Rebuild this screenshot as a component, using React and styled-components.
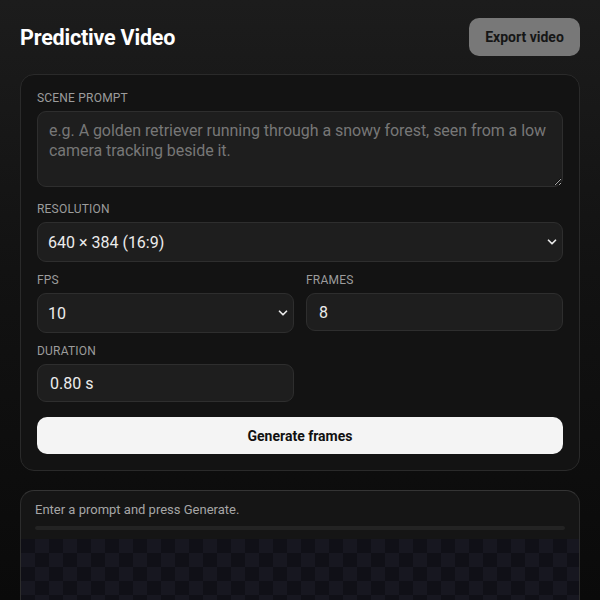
import React from 'react';
import styled, { createGlobalStyle } from 'styled-components';
import { ChevronDown } from 'lucide-react';

const GlobalStyle = createGlobalStyle`
    html, body {
        margin: 0;
        padding: 0;
        min-height: 100%;
    }
    body {
        background: linear-gradient(180deg, #1c1c1c 0%, #121212 45%, #0a0a0a 100%);
        color: #eee;
        font-family: Roboto, "Liberation Sans", sans-serif;
        color-scheme: dark;
    }
`;

const Page = styled.div`
    padding: 18px 20px 0;
    height: 600px;
    overflow: hidden;
    box-sizing: border-box;
`;

const Header = styled.header`
    display: flex;
    align-items: center;
    justify-content: space-between;
    margin-bottom: 18px;
`;

const Title = styled.h1`
    margin: 0;
    font-size: 21.5px;
    font-weight: 700;
    letter-spacing: -0.2px;
    color: #fff;
`;

const ExportButton = styled.button`
    width: 111px;
    height: 38px;
    border: none;
    border-radius: 10px;
    background: #787878;
    color: #161616;
    font-family: inherit;
    font-size: 14px;
    font-weight: 700;
`;

const Card = styled.section`
    background: #131313;
    border: 1px solid #2a2a2a;
    border-radius: 14px;
    padding: 16px;
    display: flex;
    flex-direction: column;
    gap: 11px;
`;

const Field = styled.label`
    display: flex;
    flex-direction: column;
    gap: 6px;
    flex: 1;
    min-width: 0;
`;

const Label = styled.span`
    font-size: 12px;
    line-height: 14px;
    color: #9c9c9c;
    letter-spacing: 0.2px;
    text-transform: uppercase;
`;

const controlBase = `
    box-sizing: border-box;
    width: 100%;
    background: #1e1e1e;
    border: 1px solid #2e2e2e;
    border-radius: 9px;
    color: #ececec;
    font-family: Roboto, "Liberation Sans", sans-serif;
    font-size: 16px;
    outline: none;
`;

const TextArea = styled.textarea`
    ${controlBase}
    display: block;
    height: 76px;
    padding: 9px 10px 9px 11px;
    line-height: 20px;
    letter-spacing: -0.05px;
    resize: vertical;
    margin-bottom: 4px;

    &::placeholder {
        color: #777;
    }
`;

const SelectWrap = styled.div`
    position: relative;
`;

const Select = styled.select`
    ${controlBase}
    appearance: none;
    height: 40px;
    padding: 0 28px 0 10px;
`;

const Chevron = styled(ChevronDown)`
    position: absolute;
    right: 4px;
    top: 50%;
    transform: translateY(-50%);
    color: #e8e8e8;
    pointer-events: none;
`;

const Input = styled.input`
    ${controlBase}
    height: 38px;
    padding: 0 12px;
`;

const Row = styled.div`
    display: flex;
    gap: 12px;
`;

const Spacer = styled.div`
    flex: 1;
`;

const GenerateButton = styled.button`
    margin-top: 4px;
    height: 37px;
    border: none;
    border-radius: 10px;
    background: #f4f4f4;
    color: #111;
    font-family: inherit;
    font-size: 14px;
    font-weight: 700;
`;

const PreviewCard = styled.section`
    margin-top: 19px;
    background: #151515;
    border: 1px solid #2c2c2c;
    border-top-color: #343434;
    border-radius: 14px;
    overflow: hidden;
`;

const Status = styled.div`
    padding: 11px 14px 9px;
`;

const StatusText = styled.p`
    margin: 0 0 8px;
    font-size: 13px;
    line-height: 16px;
    color: #a6a6a6;
`;

const Progress = styled.div`
    height: 4px;
    border-radius: 2px;
    background: #232323;
`;

const Canvas = styled.div`
    height: 200px;
    background-color: #101017;
    background-image:
        linear-gradient(45deg, #171720 25%, transparent 25%, transparent 75%, #171720 75%),
        linear-gradient(45deg, #171720 25%, transparent 25%, transparent 75%, #171720 75%);
    background-size: 28px 28px;
    background-position: 0 0, 14px 14px;
`;

const SelectField = ({ label, value, options }) => (
    <Field>
        <Label>{label}</Label>
        <SelectWrap>
            <Select defaultValue={value}>
                {options.map(o => (
                    <option key={o} value={o}>{o}</option>
                ))}
            </Select>
            <Chevron size={14} strokeWidth={3} />
        </SelectWrap>
    </Field>
);

const App = () => {
    return (
        <>
            <GlobalStyle />
            <Page>
                <Header>
                    <Title>Predictive Video</Title>
                    <ExportButton>Export video</ExportButton>
                </Header>

                <Card>
                    <Field>
                        <Label>Scene prompt</Label>
                        <TextArea placeholder="e.g. A golden retriever running through a snowy forest, seen from a low camera tracking beside it." />
                    </Field>

                    <SelectField
                        label="Resolution"
                        value="640 × 384 (16:9)"
                        options={['640 × 384 (16:9)', '512 × 512 (1:1)', '384 × 640 (9:16)']}
                    />

                    <Row>
                        <SelectField label="FPS" value="10" options={['8', '10', '12', '24']} />
                        <Field>
                            <Label>Frames</Label>
                            <Input type="number" defaultValue={8} />
                        </Field>
                    </Row>

                    <Row>
                        <Field>
                            <Label>Duration</Label>
                            <Input readOnly value="0.80 s" />
                        </Field>
                        <Spacer />
                    </Row>

                    <GenerateButton>Generate frames</GenerateButton>
                </Card>

                <PreviewCard>
                    <Status>
                        <StatusText>Enter a prompt and press Generate.</StatusText>
                        <Progress />
                    </Status>
                    <Canvas />
                </PreviewCard>
            </Page>
        </>
    );
};

export default App;
